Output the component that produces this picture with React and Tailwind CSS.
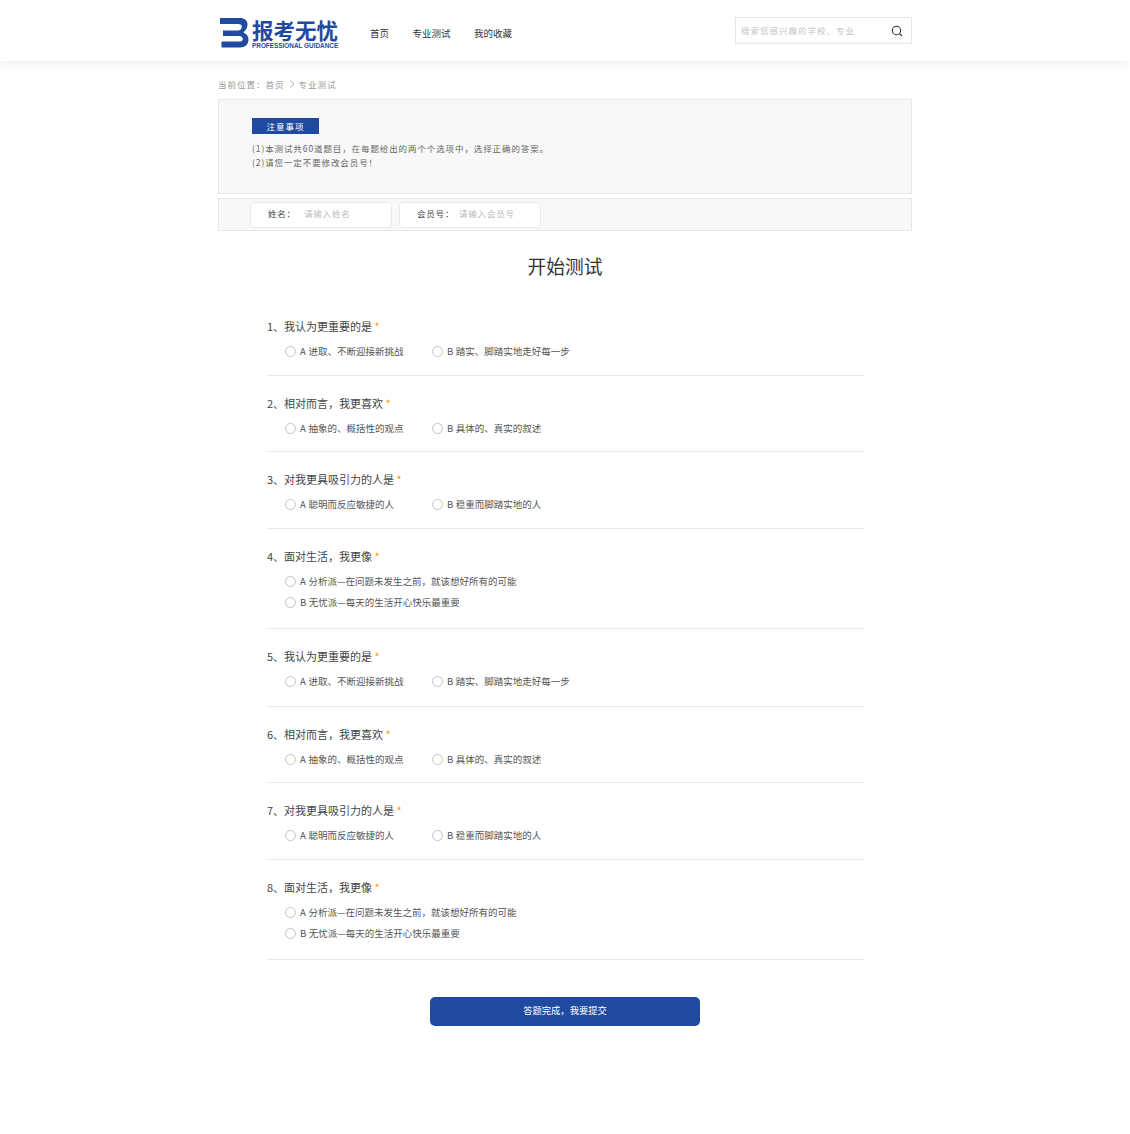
import React from 'react';

const questions = [
  { title: '1、我认为更重要的是', a: 'A 进取、不断迎接新挑战', b: 'B 踏实、脚踏实地走好每一步', h: 'h-[77px]' },
  { title: '2、相对而言，我更喜欢', a: 'A 抽象的、概括性的观点', b: 'B 具体的、真实的叙述', h: 'h-[76px]' },
  { title: '3、对我更具吸引力的人是', a: 'A 聪明而反应敏捷的人', b: 'B 稳重而脚踏实地的人', h: 'h-[77px]' },
  { title: '4、面对生活，我更像', a: 'A 分析派—在问题未发生之前，就该想好所有的可能', b: 'B 无忧派—每天的生活开心快乐最重要', stacked: true, h: 'h-[100px]' },
  { title: '5、我认为更重要的是', a: 'A 进取、不断迎接新挑战', b: 'B 踏实、脚踏实地走好每一步', h: 'h-[78px]' },
  { title: '6、相对而言，我更喜欢', a: 'A 抽象的、概括性的观点', b: 'B 具体的、真实的叙述', h: 'h-[76px]' },
  { title: '7、对我更具吸引力的人是', a: 'A 聪明而反应敏捷的人', b: 'B 稳重而脚踏实地的人', h: 'h-[77px]' },
  { title: '8、面对生活，我更像', a: 'A 分析派—在问题未发生之前，就该想好所有的可能', b: 'B 无忧派—每天的生活开心快乐最重要', stacked: true, h: 'h-[100px]' },
];

const Option = ({ text, className = '' }) => (
  <label className={`flex items-center ${className}`}>
    <span className="w-[11px] h-[11px] rounded-full border border-[#c4c4c4] bg-white mr-[4px] shrink-0" />
    <span className="text-[9.5px] leading-[14px] text-[#555] [word-spacing:0.5px]">{text}</span>
  </label>
);

const Question = ({ q }) => (
  <div className={`${q.h} border-b border-[#e8e8e8] pt-[19px]`}>
    <div className="text-[11px] leading-[16px] text-[#444]">
      {q.title} <span className="text-[#f90]">*</span>
    </div>
    {q.stacked ? (
      <div className="pl-[18px] mt-[10px] flex flex-col gap-[7px]">
        <Option text={q.a} />
        <Option text={q.b} />
      </div>
    ) : (
      <div className="pl-[18px] mt-[10px] flex">
        <Option text={q.a} className="w-[147px]" />
        <Option text={q.b} />
      </div>
    )}
  </div>
);

const Logo = () => (
  <div className="flex items-start h-[30px]">
    <svg width="30" height="30" viewBox="0 0 30 30" className="mr-[2px] shrink-0">
      <path d="M0 0H19.5C24.5 0 27.5 2.5 27.5 6.5C27.5 9.5 26 12 23.5 14.5C26.5 16 28.5 18 28.5 21.5C28.5 26.5 25 29.5 20 29.5H1.5V23.5H19C21.5 23.5 22.8 22.8 22.8 21.2C22.8 19.3 21.5 18 19 18H3V12.5H18C20.5 12.5 21.8 10.8 21.8 8.5C21.8 6.8 20.5 6 18 6H0Z" fill="#1f4aa0" />
    </svg>
    <div className="flex flex-col items-start w-[87px]">
      <div className="text-[21.5px] leading-[24px] h-[25px] font-bold text-[#1f4aa0] whitespace-nowrap">报考无忧</div>
      <div className="text-[6.4px] leading-[6px] font-bold text-[#1f4aa0] font-['Liberation_Sans',sans-serif] whitespace-nowrap">PROFESSIONAL GUIDANCE</div>
    </div>
  </div>
);

const App = () => {
  return (
    <div className="bg-white min-h-[1134px] font-['Noto_Sans_CJK_SC','Noto_Sans',sans-serif]">
      <header className="h-[61px] bg-white shadow-[0_2px_12px_rgba(0,0,0,0.08)]">
        <div className="w-[694px] mx-auto h-full flex items-center">
          <div className="ml-[2px] w-[118px] mt-[4px]"><Logo /></div>
          <nav className="flex ml-[32px] gap-[23.5px] text-[9.5px] text-[#333] mt-[5px]">
            <a>首页</a>
            <a>专业测试</a>
            <a>我的收藏</a>
          </nav>
          <div className="ml-auto w-[177px] h-[27px] border border-[#e6e6e6] flex items-center justify-between pl-[5px] pr-[8px]">
            <span className="text-[8.5px] tracking-[1px] text-[#c4c4c4]">搜索您感兴趣的学校、专业</span>
            <svg width="12" height="12" viewBox="0 0 12 12" fill="none" stroke="#333" strokeWidth="1.1">
              <circle cx="5.5" cy="5.5" r="4.2" />
              <path d="M8.6 8.6L11 11" />
            </svg>
          </div>
        </div>
      </header>

      <main className="w-[694px] mx-auto">
        <div className="h-[38px] flex items-center text-[8.5px] tracking-[1px] text-[#999] pt-[8px]">
          当前位置：首页
          <svg width="6" height="8" viewBox="0 0 6 8" fill="none" stroke="#aaa" strokeWidth="0.8" className="mx-[4px]"><path d="M1 0.5L5 4L1 7.5" /></svg>
          专业测试
        </div>

        <section className="h-[95px] bg-[#f8f8f8] border border-[#e8e8e8] pl-[33px] pt-[18px]">
          <div className="w-[67px] h-[16px] bg-[#1f4aa0] text-white text-[8.5px] leading-[14px] tracking-[1px] flex items-center justify-center pb-[1px]">注意事项</div>
          <div className="mt-[7px] text-[8.5px] leading-[14px] tracking-[0.9px] text-[#666]">
            <p>(1)本测试共60道题目，在每题给出的两个个选项中，选择正确的答案。</p>
            <p>(2)请您一定不要修改会员号！</p>
          </div>
        </section>

        <section className="mt-[4px] h-[33px] bg-[#f8f8f8] border border-[#e8e8e8] flex items-center pl-[31px] gap-[7px]">
          <div className="w-[142px] h-[26px] bg-white border border-[#eaeaea] rounded-[4px] flex items-center pl-[17px] pb-[2px] text-[8.5px] tracking-[0.8px]">
            <span className="text-[#444] w-[36px]">姓名：</span>
            <span className="text-[#bbb]">请输入姓名</span>
          </div>
          <div className="w-[142px] h-[26px] bg-white border border-[#eaeaea] rounded-[4px] flex items-center pl-[17px] pb-[2px] text-[8.5px] tracking-[0.8px]">
            <span className="text-[#444] w-[42px]">会员号：</span>
            <span className="text-[#bbb]">请输入会员号</span>
          </div>
        </section>

        <h1 className="text-center text-[18.75px] leading-[28px] text-[#333] mt-[21px]">开始测试</h1>

        <div className="ml-[49px] w-[597px] mt-[19px]">
          {questions.map((q) => (
            <Question key={q.title} q={q} />
          ))}
        </div>

        <div className="flex justify-center mt-[37px]">
          <button className="w-[270px] h-[29px] rounded-[5px] bg-[#1f4aa0] text-white text-[9.3px] pb-[1px]">答题完成，我要提交</button>
        </div>
      </main>
    </div>
  );
};

export default App;
